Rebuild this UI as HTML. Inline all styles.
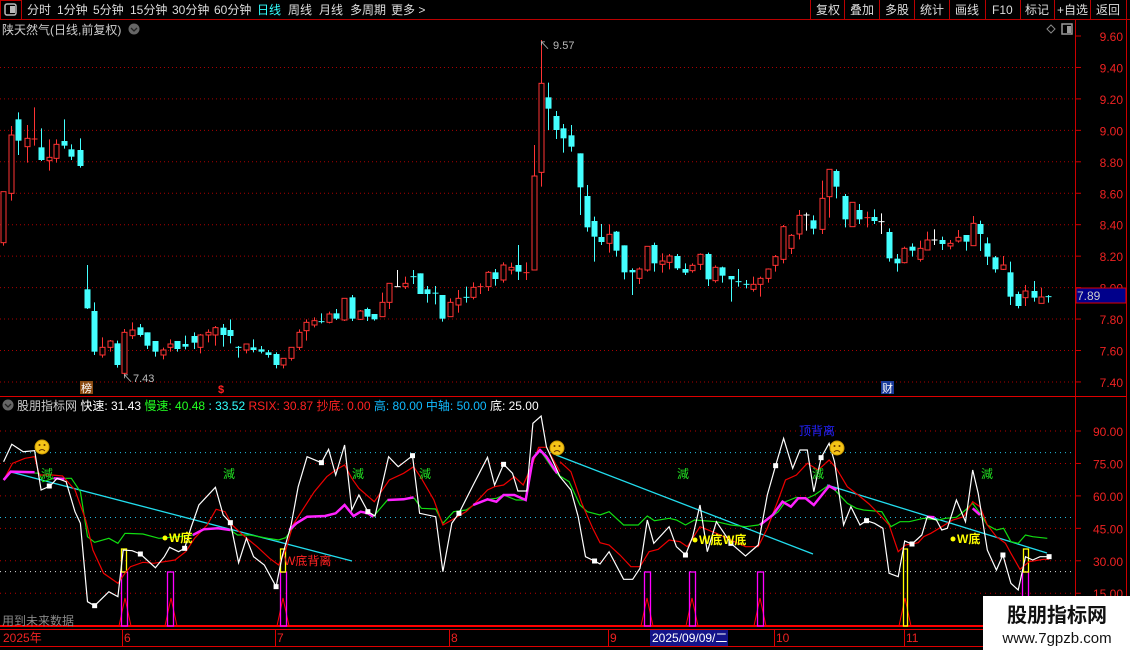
<!DOCTYPE html>
<html><head><meta charset="utf-8">
<style>
body{margin:0;background:#000;width:1130px;height:650px;overflow:hidden;font-family:"Liberation Sans","Noto Sans CJK SC",sans-serif;}
svg{position:absolute;left:0;top:0}
.t{font-family:"Liberation Sans","Noto Sans CJK SC",sans-serif;}
</style></head><body>
<svg id="s" width="1130" height="650" xmlns="http://www.w3.org/2000/svg">
<rect width="1130" height="650" fill="#000"/>
<line x1="0" y1="19.5" x2="1130" y2="19.5" stroke="#b00" />
<rect x="0.5" y="0.5" width="21" height="19" fill="none" stroke="#b00"/>
<rect x="5" y="4" width="11" height="11" rx="2" fill="none" stroke="#bbb" stroke-width="1.5"/>
<rect x="10" y="6" width="5" height="7" fill="#bbb"/>
<g class="t" font-size="12" fill="#ddd">
<text x="27" y="14">分时</text><text x="57" y="14">1分钟</text><text x="93" y="14">5分钟</text><text x="130" y="14">15分钟</text><text x="172" y="14">30分钟</text><text x="214" y="14">60分钟</text>
<text x="257" y="14" fill="#3ff">日线</text><text x="288" y="14">周线</text><text x="319" y="14">月线</text><text x="350" y="14">多周期</text><text x="391" y="14">更多 &gt;</text>
</g>
<g stroke="#b00"><line x1="810.5" y1="0" x2="810.5" y2="19"/><line x1="844.5" y1="0" x2="844.5" y2="19"/><line x1="879.5" y1="0" x2="879.5" y2="19"/><line x1="914.5" y1="0" x2="914.5" y2="19"/><line x1="949.5" y1="0" x2="949.5" y2="19"/><line x1="985.5" y1="0" x2="985.5" y2="19"/><line x1="1020.5" y1="0" x2="1020.5" y2="19"/><line x1="1054.5" y1="0" x2="1054.5" y2="19"/><line x1="1090.5" y1="0" x2="1090.5" y2="19"/><line x1="1126.5" y1="0" x2="1126.5" y2="19"/></g>
<g class="t" font-size="12" fill="#ddd">
<text x="816" y="14">复权</text><text x="850" y="14">叠加</text><text x="885" y="14">多股</text><text x="920" y="14">统计</text><text x="955" y="14">画线</text><text x="992" y="14">F10</text><text x="1025" y="14">标记</text><text x="1057" y="14">+自选</text><text x="1096" y="14">返回</text>
</g>
<text x="2" y="34" class="t" font-size="12" fill="#ccc">陕天然气(日线,前复权)</text>
<circle cx="134" cy="29" r="5.5" fill="#666"/><path d="M131 28 l3 3 l3 -3" stroke="#222" fill="none" stroke-width="1.3"/>
<path d="M1047 29 l4 -4 l4 4 l-4 4z" fill="none" stroke="#888"/>
<rect x="1062" y="24" width="10" height="10" fill="none" stroke="#999" stroke-width="1.5"/><rect x="1067" y="26" width="4" height="7" fill="#999"/>
<line x1="1075.5" y1="20" x2="1075.5" y2="630" stroke="#c00"/>
<line x1="1126.5" y1="20" x2="1126.5" y2="650" stroke="#c00"/>
<line x1="0" y1="396.5" x2="1126" y2="396.5" stroke="#d00"/>
<line x1="0" y1="629.5" x2="1126" y2="629.5" stroke="#d00"/>
<line x1="0" y1="646.5" x2="1126" y2="646.5" stroke="#d00"/>
<g id="grid"></g>
<g id="candles"></g>
<g id="ind"></g>
<text x="122" y="382" class="t" font-size="11" fill="#bbb">↖7.43</text>
<text x="539" y="49" class="t" font-size="11" fill="#bbb">↖ 9.57</text>
<rect x="80" y="381" width="13" height="13" fill="#8a4a10"/><text x="81" y="392" class="t" font-size="11" fill="#fff">榜</text>
<text x="218" y="393" class="t" font-size="11" fill="#f22" font-weight="bold">$</text>
<rect x="881" y="381" width="13" height="13" fill="#1a3a9a"/><text x="882" y="392" class="t" font-size="11" fill="#fff">财</text>
<rect x="1076" y="288" width="50" height="15" fill="#00008b" stroke="#d00"/>
<text x="1077" y="300" class="t" font-size="12" fill="#ccc">7.89</text>
<circle cx="8" cy="405" r="5.5" fill="#666"/><path d="M5 404 l3 3 l3 -3" stroke="#222" fill="none" stroke-width="1.3"/>
<text x="17" y="410" class="t" font-size="12" xml:space="preserve"><tspan fill="#ccc">股朋指标网 </tspan><tspan fill="#fff">快速: 31.43 </tspan><tspan fill="#2f2">慢速: 40.48 </tspan><tspan fill="#3ff">: 33.52 </tspan><tspan fill="#f22">RSIX: 30.87 抄底: 0.00 </tspan><tspan fill="#1bf">高: 80.00 中轴: 50.00 </tspan><tspan fill="#fff">底: 25.00</tspan></text>
<g class="t" font-size="12" fill="#2d2">
<text x="41" y="478">減</text><text x="223" y="478">減</text><text x="352" y="478">減</text><text x="419" y="478">減</text><text x="677" y="478">減</text><text x="812" y="478">減</text><text x="981" y="478">減</text>
</g>
<g class="t" font-size="12" fill="#ff0" font-weight="bold">
<circle cx="165" cy="538" r="2.5" fill="#ff0"/><text x="169" y="542">W底</text>
<circle cx="695" cy="540" r="2.5" fill="#ff0"/><text x="699" y="544">W底</text><text x="723" y="544">W底</text>
<circle cx="953" cy="539" r="2.5" fill="#ff0"/><text x="957" y="543">W底</text>
</g>
<text x="284" y="565" class="t" font-size="12" fill="#f22">W底背离</text>
<text x="799" y="435" class="t" font-size="12" fill="#22f">顶背离</text>
<g id="smile"></g>
<text x="2" y="625" class="t" font-size="12" fill="#888">用到未来数据</text>
<g class="t" font-size="12" fill="#e22">
<text x="3" y="642">2025年</text><text x="124" y="642">6</text><text x="277" y="642">7</text><text x="451" y="642">8</text><text x="610" y="642">9</text><text x="776" y="642">10</text><text x="906" y="642">11</text>
</g>
<g stroke="#d00"><line x1="122.5" y1="630" x2="122.5" y2="646"/><line x1="275.5" y1="630" x2="275.5" y2="646"/><line x1="449.5" y1="630" x2="449.5" y2="646"/><line x1="608.5" y1="630" x2="608.5" y2="646"/><line x1="774.5" y1="630" x2="774.5" y2="646"/><line x1="904.5" y1="630" x2="904.5" y2="646"/></g>
<rect x="650" y="630" width="78" height="16" fill="#14148a"/>
<text x="652" y="642" class="t" font-size="12" fill="#fff">2025/09/09/二</text>
<rect x="983" y="596" width="147" height="54" fill="#fff"/>
<text x="1057" y="622" text-anchor="middle" class="t" font-size="20" font-weight="bold" fill="#111">股朋指标网</text>
<text x="1057" y="643" text-anchor="middle" class="t" font-size="15" fill="#111">www.7gpzb.com</text>
</svg>
<script>
var NS="http://www.w3.org/2000/svg";
function el(p,t,a){var e=document.createElementNS(NS,t);for(var k in a)e.setAttribute(k,a[k]);p.appendChild(e);return e;}
var g=document.getElementById('grid');
var pl=["9.60","9.40","9.20","9.00","8.80","8.60","8.40","8.20","8.00","7.80","7.60","7.40"];
for(var i=0;i<12;i++){var y=36+i*31.45;
 if(i>0) el(g,'line',{x1:0,y1:y,x2:1075,y2:y,stroke:'#a00','stroke-dasharray':'1 3'});
 el(g,'line',{x1:1075,y1:y,x2:1081,y2:y,stroke:'#c00'});
 var t=el(g,'text',{x:1123,y:y+5,'text-anchor':'end','font-size':12,fill:'#e22','font-family':'Liberation Sans'});t.textContent=pl[i];}
function iy(v){return 431+(90-v)*2.163;}
[90,75,60,45,30,15].forEach(function(v){var y=iy(v);
 el(g,'line',{x1:0,y1:y,x2:1075,y2:y,stroke:'#b00','stroke-dasharray':'1 4'});
 el(g,'line',{x1:1075,y1:y,x2:1081,y2:y,stroke:'#c00'});
 var t=el(g,'text',{x:1123,y:y+5,'text-anchor':'end','font-size':12,fill:'#e22','font-family':'Liberation Sans'});t.textContent=v.toFixed(2);});
[80,50].forEach(function(v){el(g,'line',{x1:0,y1:iy(v),x2:1075,y2:iy(v),stroke:'#2bd','stroke-dasharray':'1 4'});});
el(g,'line',{x1:0,y1:iy(25),x2:1075,y2:iy(25),stroke:'#ddd','stroke-dasharray':'1 4'});
var C=document.getElementById('candles');
var A=[[10,305,458,305,467,'r'],[33,135,310,108,332,'r'],[53,88,152,67,195,'c'],[77,145,170,105,218,'r'],[100,145,149,52,167,'r'],[120,172,210,115,213,'c'],[143,202,212,148,242,'r'],[164,163,205,148,218,'r'],[187,153,167,88,176,'c'],[207,178,200,163,210,'c'],[231,180,228,145,233,'c'],[254,598,655,525,657,'c'],[274,663,785,637,795,'c'],[297,772,795,742,803,'r'],[318,753,772,750,785,'r'],[340,760,825,752,833,'c'],[361,727,850,717,857,'r'],[384,720,737,697,747,'r'],[408,712,735,702,740,'c'],[428,727,767,727,777,'c'],[451,753,785,753,800,'c'],[472,780,795,773,808,'r'],[494,762,772,748,785,'r'],[515,753,777,753,785,'c'],[538,762,770,737,778,'c'],[562,738,758,727,777,'c'],[582,735,772,732,790,'r'],[605,727,735,718,757,'r'],[625,713,735,708,767,'r'],[648,713,735,702,770,'c'],[669,720,738,688,760,'c'],[692,771,773,768,803,'c'],[715,762,780,762,790,'r'],[736,772,780,748,787,'c'],[759,778,785,768,790,'c'],[779,787,795,780,803,'c'],[802,792,825,787,835,'c'],[823,805,825,805,835,'r'],[846,772,805,772,812,'r'],[869,727,772,718,780,'r'],[890,697,722,688,752,'r'],[912,692,705,682,712,'r'],[933,694,696,670,700,'c'],[956,672,697,665,700,'r'],[977,670,686,657,690,'c'],[1000,625,690,625,693,'r'],[1023,622,686,615,693,'c'],[1044,663,688,660,690,'r'],[1067,657,680,653,693,'c'],[1087,672,688,672,692,'c'],[1110,637,680,608,680,'r'],[1131,580,637,580,657,'r'],[1154,589,591,540,591,'w'],[1177,580,590,560,597,'r'],[1198,559,561,540,582,'c'],[1221,550,612,550,612,'c'],[1241,598,612,588,638,'c'],[1264,607,612,588,643,'c'],[1285,615,686,615,695,'c'],[1308,637,680,625,680,'r'],[1331,625,645,600,668,'r'],[1352,621,623,590,638,'c'],[1374,592,622,577,628,'r'],[1395,589,591,580,612,'r'],[1418,547,590,543,603,'r'],[1438,547,567,537,587,'c'],[1461,525,570,517,578,'r'],[1484,532,540,518,553,'r'],[1505,525,545,465,570,'c'],[1528,547,549,517,570,'r']];
var B=[[35,438,720,345,720,'r'],[55,160,427,30,470,'r'],[73,202,236,158,300,'c'],[93,258,300,243,327,'c'],[111,295,325,282,368,'c'],[131,316,350,285,365,'c'],[153,370,472,370,555,'c'],[171,498,592,465,605,'c'],[191,573,620,560,695,'c'],[209,621,636,582,645,'c'],[230,613,640,583,668,'r'],[248,605,662,603,680,'c'],[268,646,727,646,748,'c'],[289,720,727,715,795,'c'],[307,717,745,712,762,'r'],[327,649,720,648,725,'r'],[345,645,700,638,725,'c'],[366,693,703,670,728,'r'],[384,678,697,672,718,'r'],[404,678,715,672,720,'c'],[425,717,728,700,735,'c'],[443,706,722,700,728,'r'],[463,673,703,670,720,'r'],[482,672,748,668,768,'c'],[502,712,752,706,758,'r'],[520,712,737,710,758,'c'],[541,738,748,738,815,'c'],[561,754,756,717,770,'c'],[580,762,764,750,775,'c'],[600,763,778,740,785,'r'],[618,745,763,740,800,'r'],[638,717,745,715,758,'r'],[656,680,706,675,725,'r'],[677,590,688,585,700,'r'],[697,616,655,612,672,'r'],[716,556,612,540,628,'r'],[735,554,556,548,602,'w'],[754,571,596,556,613,'c'],[775,505,598,452,612,'r'],[793,418,500,418,563,'r'],[813,423,470,418,505,'c'],[834,498,568,492,592,'c'],[852,517,590,517,590,'r'],[872,540,568,522,582,'c'],[891,562,564,545,592,'r'],[911,561,573,538,582,'c'],[929,574,576,550,612,'w'],[949,606,685,595,695,'c'],[969,686,700,672,725,'c'],[988,655,698,650,700,'r'],[1008,650,662,640,680,'c'],[1027,655,688,632,695,'r'],[1047,630,660,605,660,'r'],[1065,629,631,598,645,'w'],[1085,630,642,620,660,'c'],[1105,640,648,630,658,'r'],[1125,622,633,600,638,'r'],[1145,615,635,615,662,'c'],[1163,580,647,558,647,'r'],[1183,582,612,572,663,'c'],[1201,640,680,622,705,'c'],[1222,682,718,678,728,'c'],[1242,705,718,678,720,'r'],[1260,727,800,695,825,'c'],[1281,792,828,785,835,'c'],[1299,783,803,765,828,'r'],[1320,783,803,753,815,'c'],[1338,801,820,773,820,'r'],[1358,799,801,795,818,'c']];
function drawC(x,t,b,h,l,c){var col=c=='r'?'#f33':(c=='c'?'#4ff':'#fff');
 var xm=Math.round(x)+0.5;
 el(C,'line',{x1:xm,y1:h,x2:xm,y2:l,stroke:col});
 if(b-t<2){el(C,'line',{x1:xm-3,y1:(t+b)/2,x2:xm+3,y2:(t+b)/2,stroke:col});return;}
 if(c=='r')el(C,'rect',{x:xm-2.5,y:t,width:5,height:b-t,fill:'#000',stroke:col});
 else el(C,'rect',{x:xm-3,y:t,width:6,height:b-t,fill:col});}
A.forEach(function(a){drawC(a[0]/2.904,a[1]/3+90,a[2]/3+90,a[3]/3+90,a[4]/3+90,a[5]);});
B.forEach(function(a){drawC(520+a[0]/2.57,a[1]/3+30,a[2]/3+30,a[3]/3+30,a[4]/3+30,a[5]);});
var I=document.getElementById('ind');
function P5(arr){var s=[];for(var i=0;i<arr.length;i+=2)s.push((arr[i]/2.8).toFixed(1)+','+(410+arr[i+1]/3).toFixed(1));return s.join(' ');}
function P6(arr){var s=[];for(var i=0;i<arr.length;i+=2)s.push((560+arr[i]/2.75).toFixed(1)+','+(410+arr[i+1]/3).toFixed(1));return s.join(' ');}
function pl5(a,c,w){el(I,'polyline',{points:P5(a),fill:'none',stroke:c,'stroke-width':w});}
function pl6(a,c,w){el(I,'polyline',{points:P6(a),fill:'none',stroke:c,'stroke-width':w});}
var base=626;
el(I,'line',{x1:0,y1:base,x2:985,y2:base,stroke:'#f00','stroke-width':2});
[125,171,283,647,692,760,905,1025].forEach(function(x){el(I,'polyline',{points:(x-6)+','+base+' '+x+','+598+' '+(x+6)+','+base,fill:'none',stroke:'#f00'});});
[[121,572],[167,572],[280,572],[644,572],[689,572],[757,572],[1022,572]].forEach(function(p){el(I,'rect',{x:p[0]+0.5,y:p[1],width:6,height:base-p[1],fill:'none',stroke:'#f0f','stroke-width':1.3});});
[[121,549],[280,549],[1023,549]].forEach(function(p){el(I,'rect',{x:p[0]+0.5,y:p[1],width:5,height:23,fill:'none',stroke:'#ff0','stroke-width':1.3});});
el(I,'rect',{x:903.5,y:549,width:4,height:77,fill:'none',stroke:'#ff0','stroke-width':1.3});
el(I,'line',{x1:11,y1:472,x2:352,y2:561,stroke:'#2de','stroke-width':1.3});
el(I,'line',{x1:556,y1:455,x2:813,y2:554,stroke:'#2de','stroke-width':1.3});
el(I,'line',{x1:827,y1:485,x2:1047,y2:553,stroke:'#2de','stroke-width':1.3});
pl5([10,210,30,185,110,190,120,215,150,205,200,205,225,245,245,380,265,397,305,385,330,400,350,370,400,372,445,385,500,380,540,375,570,358,610,355,645,360,665,375,700,375,750,385,780,390,800,383,830,340,860,320,910,318,940,310,965,285,990,318,1010,305,1030,310,1045,320,1085,270,1160,265,1180,295,1220,297,1240,340,1270,305,1305,300,1330,283,1365,268,1390,265,1410,255,1445,270,1472,270,1492,145,1512,120,1550,180,1568,200],'#1d1',1.2);
pl6([0,198,25,215,55,285,75,305,110,315,135,305,175,345,215,345,240,318,260,332,300,325,320,330,345,345,370,330,430,335,470,345,510,350,545,345,570,330,600,305,620,275,650,262,680,265,700,255,740,225,760,245,790,280,815,295,835,300,885,305,910,350,935,335,960,335,1000,325,1040,330,1060,325,1090,322,1115,300,1135,280,1155,310,1175,345,1200,360,1220,355,1240,395,1260,400,1280,375,1300,380,1340,385],'#1d1',1.2);
pl5([10,210,35,160,70,145,97,140,110,195,145,195,175,198,210,240,240,330,260,420,290,490,330,520,350,490,365,470,400,457,430,460,460,455,490,450,520,425,545,385,580,345,605,298,630,305,650,345,680,375,720,410,755,445,780,465,800,420,820,345,850,295,880,245,915,200,940,180,965,165,985,205,1005,235,1048,275,1090,210,1130,190,1158,170,1180,205,1215,270,1240,345,1265,330,1305,305,1330,280,1365,240,1385,230,1410,225,1440,200,1465,225,1490,165,1508,112,1530,112,1568,185],'#e00',1.2);
pl6([0,155,30,185,60,280,90,355,110,398,135,405,165,435,195,470,220,470,245,425,270,418,300,390,330,395,350,410,385,350,430,370,470,390,510,410,545,410,570,355,600,270,620,210,650,195,680,160,710,180,740,150,760,175,790,230,820,255,850,282,880,315,905,345,930,425,950,405,985,398,1000,380,1020,370,1050,350,1080,330,1110,320,1135,275,1155,290,1175,345,1200,380,1225,400,1240,430,1265,478,1290,455,1330,448,1345,448],'#e00',1.2);
pl5([10,210,30,185,97,187],'#f2f',2.5);pl5([150,205,180,207],'#f2f',2.5);
pl5([540,375,570,358,610,355,645,360],'#f2f',2.5);
pl5([810,360,830,340,860,320,910,318,940,310,965,285,990,318,1010,305,1030,310,1045,320],'#f2f',2.5);
pl5([1085,270,1130,268,1158,262],'#f2f',2.5);
pl5([1325,285,1365,268,1390,275,1410,255,1440,255,1472,270,1492,145,1512,120,1530,140,1560,190],'#f2f',2.5);
pl6([550,345,585,315,612,275,635,290,655,265,675,265,698,285,740,228,760,240],'#f2f',2.5);
pl6([1010,320,1030,322],'#f2f',2.5);pl6([1135,295,1155,315],'#f2f',2.5);
pl5([10,155,33,103,65,125,97,122,115,240,140,228,160,205,185,215,210,305,225,340,245,575,265,587,305,545,330,560,345,420,370,422,393,432,435,473,460,440,475,412,500,425,517,415,535,352,557,285,603,232,625,315,645,338,668,458,690,385,710,440,740,465,773,530,790,440,815,345,835,230,860,140,900,158,920,118,940,195,965,105,985,300,1005,255,1030,305,1050,318,1088,140,1115,170,1155,137,1175,310,1220,320,1240,485,1265,340,1285,310,1325,225,1365,142,1385,225,1410,163,1435,190,1450,243,1475,243,1492,40,1515,18,1530,110,1568,200],'#fff',1.2);
pl6([0,200,30,240,50,320,70,440,95,453,110,462,135,425,175,508,200,508,220,475,240,330,258,400,300,350,320,410,345,435,365,380,385,285,405,425,430,335,470,400,510,438,545,405,570,255,593,167,615,85,640,175,660,120,680,120,698,245,718,143,740,100,755,155,780,345,800,290,825,345,843,332,865,340,888,355,905,490,930,500,948,393,968,402,995,375,1010,320,1035,330,1050,360,1065,355,1090,270,1115,335,1135,180,1150,250,1175,420,1200,480,1218,435,1240,520,1260,540,1280,440,1300,450,1320,440,1345,440],'#fff',1.2);
[[138,228],[265,587],[393,432],[517,415],[645,338],[773,530],[900,158],[1030,305],[1155,137],[1285,310],[1410,163]].forEach(function(p){el(I,'rect',{x:p[0]/2.8-2.5,y:410+p[1]/3-2.5,width:5,height:5,fill:'#fff'});});
[[95,453],[345,435],[470,400],[593,167],[718,143],[843,332],[968,402],[1218,435],[1345,440]].forEach(function(p){el(I,'rect',{x:560+p[0]/2.75-2.5,y:410+p[1]/3-2.5,width:5,height:5,fill:'#fff'});});
var S=document.getElementById('smile');
[[42,447],[557,448],[837,448]].forEach(function(p){el(S,'circle',{cx:p[0],cy:p[1],r:7,fill:'#f5c518',stroke:'#c90'});
 el(S,'circle',{cx:p[0]-2.5,cy:p[1]-2,r:1,fill:'#630'});el(S,'circle',{cx:p[0]+2.5,cy:p[1]-2,r:1,fill:'#630'});
 el(S,'path',{d:'M'+(p[0]-3)+' '+(p[1]+4)+' q3 -3 6 0',stroke:'#630',fill:'none'});});
</script>
</body></html>
